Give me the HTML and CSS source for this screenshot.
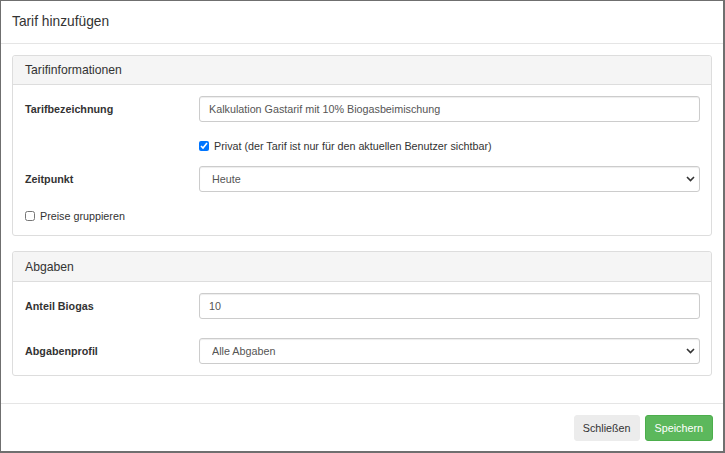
FILE: index.html
```html
<!DOCTYPE html>
<html lang="de">
  <head>
    <meta charset="UTF-8" />
    <meta name="viewport" content="width=device-width, initial-scale=1.0" />
    <title>Tarif hinzufügen</title>
    <link rel="stylesheet" href="styles.css">
  </head>
  <body>
    <div class="modal-content">
      <div class="modal-header">
        <h4 class="modal-title">Tarif hinzufügen</h4>
      </div>

      <div class="modal-body">
        <!-- Tarifinformationen -->
        <div class="panel panel-info">
          <div class="panel-heading">Tarifinformationen</div>
          <div class="panel-body">
            <div class="form-group">
              <label class="control-label" for="tarifName">Tarifbezeichnung</label>
              <input type="text" id="tarifName" class="form-control" value="Kalkulation Gastarif mit 10% Biogasbeimischung" />
            </div>
            <div class="form-group checkbox-row">
              <span></span>
              <label class="check">
                <input type="checkbox" checked />
                Privat (der Tarif ist nur für den aktuellen Benutzer sichtbar)
              </label>
            </div>
            <div class="form-group">
              <label class="control-label" for="zeitpunkt">Zeitpunkt</label>
              <div class="select-wrap">
                <select id="zeitpunkt" class="form-control">
                  <option>Heute</option>
                </select>
                <svg class="chevron" width="9" height="6" viewBox="0 0 9 6">
                  <path d="M1 1l3.5 3.5L8 1" fill="none" stroke="#333" stroke-width="1.6" />
                </svg>
              </div>
            </div>
            <div class="check-only">
              <label class="check">
                <input type="checkbox" />
                Preise gruppieren
              </label>
            </div>
          </div>
        </div>

        <!-- Abgaben -->
        <div class="panel panel-fees">
          <div class="panel-heading">Abgaben</div>
          <div class="panel-body">
            <div class="form-group">
              <label class="control-label" for="biogas">Anteil Biogas</label>
              <input type="text" id="biogas" class="form-control" value="10" />
            </div>
            <div class="form-group">
              <label class="control-label" for="profil">Abgabenprofil</label>
              <div class="select-wrap">
                <select id="profil" class="form-control">
                  <option>Alle Abgaben</option>
                </select>
                <svg class="chevron" width="9" height="6" viewBox="0 0 9 6">
                  <path d="M1 1l3.5 3.5L8 1" fill="none" stroke="#333" stroke-width="1.6" />
                </svg>
              </div>
            </div>
          </div>
        </div>
      </div>

      <div class="modal-footer">
        <button class="btn btn-default">Schließen</button>
        <button class="btn btn-success">Speichern</button>
      </div>
    </div>
  </body>
</html>
```

FILE: styles.css
```css
/* General styling */
* {
  box-sizing: border-box;
}

body {
  margin: 0;
  font-family: "Liberation Sans", Arial, sans-serif;
  font-size: 10.75px;
  color: #333;
  background-color: #fff;
}

.modal-content {
  height: 453px;
  display: flex;
  flex-direction: column;
  border-top: 1px solid #6f6f6f;
  border-left: 1px solid #6f6f6f;
  border-right: 2px solid #6f6f6f;
  border-bottom: 2px solid #6f6f6f;
  background-color: #fff;
}

/* Header */
.modal-header {
  height: 43px;
  padding: 0 11px;
  display: flex;
  align-items: center;
  border-bottom: 1px solid #e5e5e5;
}

.modal-title {
  margin: 0;
  font-size: 13.75px;
  font-weight: normal;
  color: #333;
  padding-bottom: 1px;
}

/* Body */
.modal-body {
  flex: 1;
  padding: 11px 11px 0 11px;
}

.panel {
  border: 1px solid #ddd;
  border-radius: 3px;
  margin-bottom: 15px;
}

.panel-heading {
  height: 29px;
  padding: 0 12px;
  display: flex;
  align-items: center;
  font-size: 12.2px;
  color: #333;
  background-color: #f5f5f5;
  border-bottom: 1px solid #ddd;
  border-radius: 3px 3px 0 0;
}

.panel-fees .panel-heading {
  height: 30px;
}

.panel-body {
  padding: 11px 11px 11px 12px;
}

.form-group {
  display: grid;
  grid-template-columns: 174px 1fr;
  align-items: center;
  margin-bottom: 11px;
}

.panel-fees .form-group {
  margin-bottom: 19px;
}

.panel-fees .form-group:last-child {
  margin-bottom: 0;
}

.control-label {
  font-weight: bold;
}

.form-control {
  width: 100%;
  height: 26px;
  padding: 0 9px;
  font-family: inherit;
  font-size: 10.75px;
  color: #555;
  background-color: #fff;
  border: 1px solid #ccc;
  border-radius: 3px;
  box-shadow: inset 0 1px 1px rgba(0, 0, 0, 0.075);
  outline: none;
}

select.form-control {
  appearance: none;
  -webkit-appearance: none;
  padding-left: 12px;
}

.select-wrap {
  position: relative;
}

.chevron {
  position: absolute;
  right: 5px;
  top: 10px;
  pointer-events: none;
}

/* Checkboxes */
.checkbox-row {
  height: 21px;
  padding-top: 5px;
  margin-bottom: 12px;
}

.check {
  display: flex;
  align-items: center;
  gap: 5px;
  color: #333;
}

.check input {
  width: 10px;
  height: 10px;
  margin: 0;
  accent-color: #0075ff;
}

.check-only {
  height: 21px;
  padding-top: 5px;
  display: flex;
  align-items: center;
}

/* Footer */
.modal-footer {
  padding: 11px 10px 10px 0;
  display: flex;
  justify-content: flex-end;
  gap: 5px;
  border-top: 1px solid #e5e5e5;
}

.btn {
  height: 26px;
  padding: 0 9px;
  font-family: inherit;
  font-size: 10.75px;
  border-radius: 3px;
  border: 1px solid transparent;
  cursor: pointer;
}

.btn-default {
  padding: 0 8px;
  color: #333;
  background-color: #ececec;
  border-color: #ececec;
}

.btn-success {
  color: #fff;
  background-color: #5cb85c;
  border-color: #4cae4c;
}
```
